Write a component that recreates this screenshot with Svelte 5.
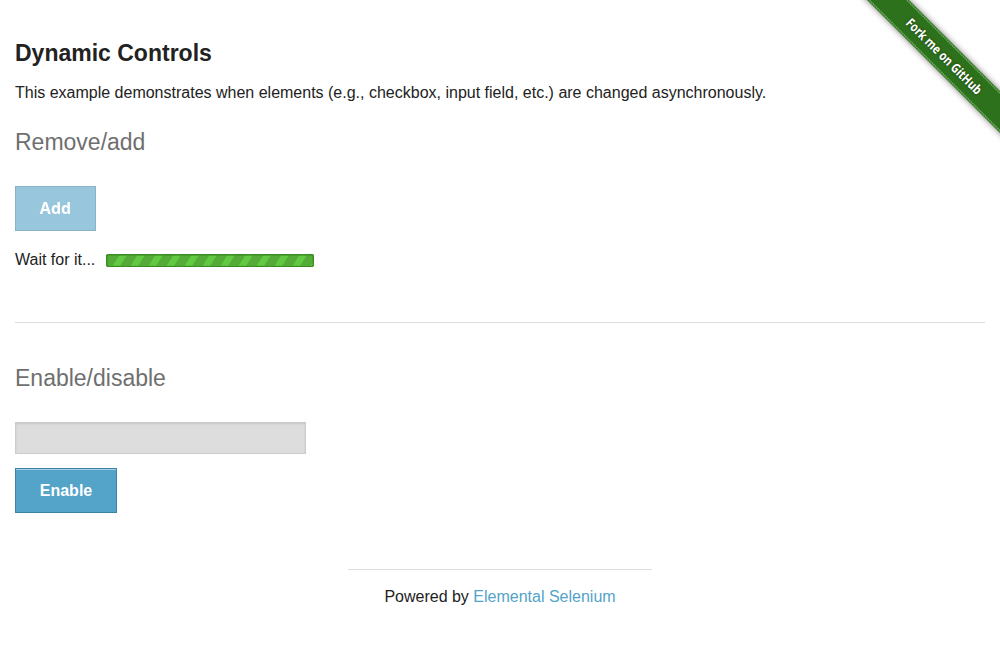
<script>
  const stripes = Array.from({ length: 12 }, (_, i) => 6 + i * 18);
</script>

<a class="ribbon" href="#fork" aria-label="Fork me on GitHub">
  <svg width="149" height="149" viewBox="0 0 149 149">
    <defs>
      <filter id="shade" x="-20%" y="-20%" width="140%" height="140%">
        <feDropShadow dx="0" dy="0" stdDeviation="3" flood-color="#000" flood-opacity="0.5" />
      </filter>
    </defs>
    <g transform="translate(93.5 56.5) rotate(45)">
      <rect x="-130" y="-14.8" width="260" height="29.6" fill="#2f711d" filter="url(#shade)" />
      <path d="M-130 -13.2H130M-130 13.2H130" stroke="#7fbd72" stroke-width="1" stroke-dasharray="1.5 .7" />
      <text x="-51" y="4.8" textLength="101" lengthAdjust="spacingAndGlyphs">Fork me on GitHub</text>
    </g>
  </svg>
</a>

<main>
  <h4>Dynamic Controls</h4>
  <p class="intro">This example demonstrates when elements (e.g., checkbox, input field, etc.) are changed asynchronously.</p>

  <h4 class="subheader">Remove/add</h4>
  <button class="disabled" disabled><span>Add</span></button>
  <div class="loading">
    <span>Wait for it...</span>
    <svg width="208" height="13" viewBox="0 0 208 13">
      <defs><clipPath id="bar"><rect width="208" height="13" rx="2" /></clipPath></defs>
      <g clip-path="url(#bar)">
        <rect width="208" height="13" fill="#55ab37" />
        {#each stripes as x}
          <path d="M{x} 12L{x + 7} 1H{x + 15.5}L{x + 8.5} 12Z" fill="#61c942" stroke="#4e9f32" stroke-width=".5" />
        {/each}
        <path d="M1 1.5H207M1.5 1V12M206.5 1V12" stroke="#3c8c1e" stroke-opacity=".45" />
      </g>
      <rect x=".5" y=".5" width="207" height="12" rx="1.5" fill="none" stroke="#398d21" />
    </svg>
  </div>
  <hr />

  <h4 class="subheader">Enable/disable</h4>
  <input type="text" disabled aria-label="Text" />
  <button>Enable</button>
</main>

<footer>
  <div>Powered by <a href="#elemental">Elemental Selenium</a></div>
</footer>

<style>
  :global(body) {
    margin: 0;
    overflow: hidden;
    background: #fff;
    color: #222;
    font: 16px/24px "Liberation Sans", Arial, sans-serif;
  }
  .ribbon { position: absolute; top: 0; right: 0; width: 149px; height: 149px; }
  .ribbon svg { display: block; }
  .ribbon text {
    font: bold 13px "Open Sans", sans-serif;
    fill: #fff;
    text-shadow: 0 0 3px rgba(0, 0, 0, .5);
  }
  main { padding: 37px 15px 0; }
  h4 { margin: 0; font-size: 23px; line-height: 32px; font-weight: bold; }
  .intro { margin: 11px 0 0; line-height: 25px; }
  .subheader { margin-top: 21px; color: #6f6f6f; font-weight: normal; }
  button {
    display: block;
    box-sizing: border-box;
    width: 102px;
    height: 45px;
    margin: 14px 0 0;
    padding: 0;
    border: 1px solid #3b82a3;
    background: #54a3c8;
    box-shadow: inset 0 1px 0 rgba(255, 255, 255, .5);
    color: #fff;
    font: bold 16px "Liberation Sans", Arial, sans-serif;
  }
  .disabled {
    width: 81px;
    margin-top: 28px;
    padding-bottom: 2px;
    opacity: .6;
    box-shadow: none;
    font-family: "Open Sans", sans-serif;
  }
  .loading { display: flex; gap: 11px; margin-top: 16px; height: 26px; }
  .loading span { line-height: 25px; width: 80px; white-space: nowrap; }
  .loading svg { margin-top: 7px; }
  hr { border: 0; border-top: 1px solid #ddd; margin: 49px 0 0; }
  hr + .subheader { margin-top: 39px; }
  input {
    display: block;
    box-sizing: border-box;
    width: 291px;
    height: 32px;
    margin: 28px 0 0;
    border: 1px solid #ccc;
    border-radius: 0;
    background: #ddd;
    box-shadow: inset 0 1px 2px rgba(0, 0, 0, .1);
  }
  footer { width: 304px; margin: 56px auto 0; border-top: 1px solid #ddd; text-align: center; }
  footer div { padding-top: 14px; line-height: 25px; }
  footer a { color: #54a3c8; text-decoration: none; }
</style>
